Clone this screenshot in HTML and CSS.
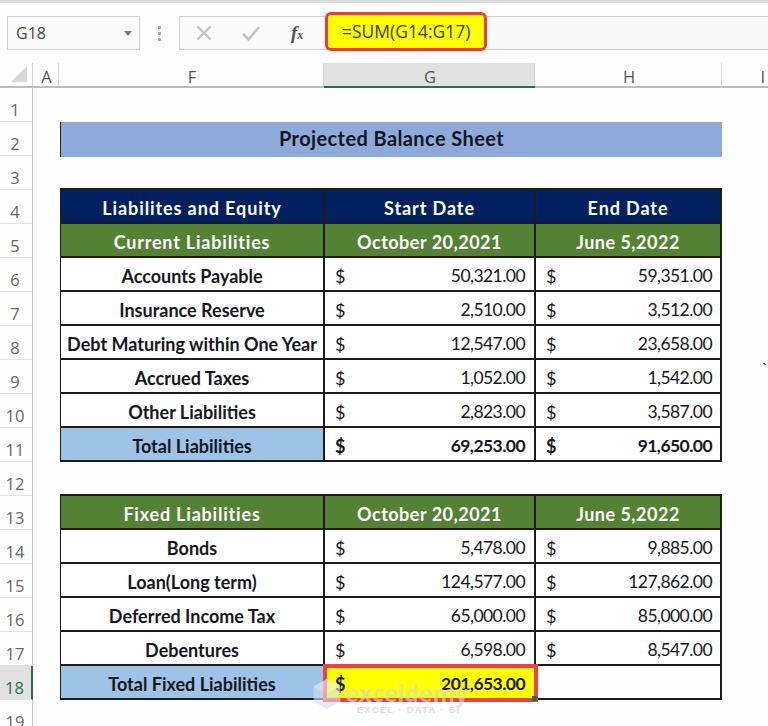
FILE: index.html
```html
<!DOCTYPE html>
<html lang="en">
<head>
<meta charset="utf-8">
<title>Projected Balance Sheet</title>
<link rel="stylesheet" href="styles.css">
</head>
<body>
<div class="top-strip"></div>
<div class="toolbar">
  <div class="namebox"><span>G18</span><i class="caret"></i></div>
  <div class="dots"><i></i><i></i><i></i></div>
  <div class="fxbox">
    <svg class="ico" width="18" height="18" viewBox="0 0 18 18"><path d="M2.500 2.500 L15.500 15.500 M15.500 2.500 L2.500 15.500" stroke="#c4c4c4" stroke-width="2.400" fill="none"/></svg>
    <svg class="ico" width="20" height="18" viewBox="0 0 20 18"><path d="M2 10 L7.500 15.500 L18 3" stroke="#c4c4c4" stroke-width="2.600" fill="none"/></svg>
    <span class="fx">f<span class="fx-x">x</span></span>
  </div>
  <div class="formula-track">
    <div class="formula">=SUM(G14:G17)</div>
  </div>
</div>
<div class="gap"></div>
<div class="colhead">
  <div class="corner"><i></i></div>
  <div class="ch ch-a">A</div>
  <div class="ch ch-f">F</div>
  <div class="ch ch-g">G</div>
  <div class="ch ch-h">H</div>
  <div class="ch ch-i">I</div>
</div>
<main class="sheet">
  <div class="row"><div class="rh">1</div></div>
  <div class="row"><div class="rh">2</div><div class="title">Projected Balance Sheet</div></div>
  <div class="row"><div class="rh">3</div><div class="rule"></div></div>

  <div class="row"><div class="rh">4</div><div class="c f navy">Liabilites and Equity</div><div class="c g navy">Start Date</div><div class="c h navy">End Date</div></div>
  <div class="row"><div class="rh">5</div><div class="c f green">Current Liabilities</div><div class="c g green date">October 20,2021</div><div class="c h green date">June 5,2022</div></div>
  <div class="row"><div class="rh">6</div><div class="c f lbl">Accounts Payable</div><div class="c g num"><span>$</span><span>50,321.00</span></div><div class="c h num"><span>$</span><span>59,351.00</span></div></div>
  <div class="row"><div class="rh">7</div><div class="c f lbl">Insurance Reserve</div><div class="c g num"><span>$</span><span>2,510.00</span></div><div class="c h num"><span>$</span><span>3,512.00</span></div></div>
  <div class="row"><div class="rh">8</div><div class="c f lbl">Debt Maturing within One Year</div><div class="c g num"><span>$</span><span>12,547.00</span></div><div class="c h num"><span>$</span><span>23,658.00</span></div></div>
  <div class="row"><div class="rh">9</div><div class="c f lbl">Accrued Taxes</div><div class="c g num"><span>$</span><span>1,052.00</span></div><div class="c h num"><span>$</span><span>1,542.00</span></div><div class="tick">`</div></div>
  <div class="row"><div class="rh">10</div><div class="c f lbl">Other Liabilities</div><div class="c g num"><span>$</span><span>2,823.00</span></div><div class="c h num"><span>$</span><span>3,587.00</span></div></div>
  <div class="row"><div class="rh">11</div><div class="c f lbl total">Total Liabilities</div><div class="c g num strong"><span>$</span><span>69,253.00</span></div><div class="c h num strong"><span>$</span><span>91,650.00</span></div></div>
  <div class="row"><div class="rh">12</div><div class="rule"></div></div>

  <div class="row"><div class="rh">13</div><div class="c f green">Fixed Liabilities</div><div class="c g green date">October 20,2021</div><div class="c h green date">June 5,2022</div></div>
  <div class="row"><div class="rh">14</div><div class="c f lbl">Bonds</div><div class="c g num"><span>$</span><span>5,478.00</span></div><div class="c h num"><span>$</span><span>9,885.00</span></div></div>
  <div class="row"><div class="rh">15</div><div class="c f lbl">Loan(Long term)</div><div class="c g num"><span>$</span><span>124,577.00</span></div><div class="c h num"><span>$</span><span>127,862.00</span></div></div>
  <div class="row"><div class="rh">16</div><div class="c f lbl">Deferred Income Tax</div><div class="c g num"><span>$</span><span>65,000.00</span></div><div class="c h num"><span>$</span><span>85,000.00</span></div></div>
  <div class="row"><div class="rh">17</div><div class="c f lbl">Debentures</div><div class="c g num"><span>$</span><span>6,598.00</span></div><div class="c h num"><span>$</span><span>8,547.00</span></div></div>
  <div class="row"><div class="rh rh-on">18</div><div class="c f lbl total">Total Fixed Liabilities</div><div class="c g num strong picked"><span>$</span><span>201,653.00</span></div><div class="c h"></div></div>
  <div class="row"><div class="rh">19</div></div>

  <div class="watermark">
    <svg width="30" height="32" viewBox="0 0 36 38"><path d="M18 1 L34 10 L34 28 L18 37 L2 28 L2 10 Z" fill="#d6e0ee"/><path d="M18 1 L34 10 L18 19 L2 10 Z" fill="#e9eef5"/></svg>
    <div class="wm-text">
      <div class="wm-name">exceldemy</div>
      <div class="wm-sub">EXCEL · DATA · BI</div>
    </div>
  </div>
</main>
</body>
</html>
```

FILE: styles.css
```css
* { box-sizing: border-box; }
html, body { margin: 0; padding: 0; }
body {
  width: 768px;
  height: 726px;
  overflow: hidden;
  background: #fefefe;
  font-family: Lato, "Open Sans", sans-serif;
  color: #16161e;
}
.top-strip { height: 3px; background: #dcdcdc; }
.toolbar {
  height: 47px;
  padding-top: 13px;
  display: flex;
  align-items: flex-start;
  background: #fefefe;
}
.namebox {
  margin-left: 7px;
  width: 133px;
  height: 34px;
  border: 1px solid #cfcfcf;
  background: #fafafa;
  display: flex;
  align-items: center;
  justify-content: space-between;
  padding: 0 7px 0 8px;
  font: 16px "Open Sans", sans-serif;
  color: #444;
}
.caret {
  width: 0; height: 0;
  border-left: 4.500px solid transparent;
  border-right: 4.500px solid transparent;
  border-top: 5px solid #777;
}
.dots {
  width: 39px;
  height: 34px;
  display: flex;
  flex-direction: column;
  align-items: center;
  justify-content: center;
  gap: 3px;
}
.dots i { width: 3px; height: 3px; background: #a9a9a9; }
.fxbox {
  width: 143px;
  height: 34px;
  border: 1px solid #cfcfcf;
  border-right: 0;
  background: #fafafa;
  display: flex;
  align-items: center;
  padding-left: 15px;
}
.fxbox .ico:nth-child(2) { margin-left: 28px; }
.fx {
  margin-left: 30px;
  font: italic bold 19px "Liberation Serif", serif;
  color: #555;
}
.fx-x { font-size: 12px; }
.formula-track {
  flex: 1;
  height: 34px;
  border-top: 1px solid #cfcfcf;
  border-bottom: 1px solid #cfcfcf;
  background: #f8f8f8;
  position: relative;
}
.formula {
  position: absolute;
  left: 3px;
  top: -5px;
  width: 162px;
  height: 39px;
  border: 3px solid #ee3b3b;
  border-radius: 6px;
  background: #ffff00;
  padding-left: 14px;
  font: 17.500px/33px "Open Sans", sans-serif;
  color: #3a3a10;
}
.gap { height: 13px; }
.colhead {
  height: 25px;
  display: flex;
  border-bottom: 2px solid #bdbdbd;
}
.corner { width: 33px; position: relative; border-right: 1px solid #d4d4d4; }
.corner i {
  position: absolute;
  right: 5px;
  bottom: 4px;
  width: 16px;
  height: 16px;
  background: #d8d8d8;
  clip-path: polygon(100% 0, 100% 100%, 0 100%);
}
.ch {
  display: flex;
  align-items: center;
  justify-content: center;
  padding: 3px 0 0 2px;
  font: 16.500px "Open Sans", sans-serif;
  color: #555;
  border-right: 1px solid #d4d4d4;
}
.ch-a { width: 26px; }
.ch-f { width: 265px; }
.ch-g { width: 211px; background: #e1e1e1; box-shadow: 0 2px 0 #217346; }
.ch-h { width: 187px; }
.ch-i { width: 46px; border-right: 0; justify-content: flex-end; padding-right: 3px; }
.sheet { position: relative; }
.row {
  height: 34px;
  display: grid;
  grid-template-columns: 33px 27px 265px 211px 186px 46px;
  grid-template-rows: 34px;
  position: relative;
}
.rh {
  grid-column: 1;
  font: 16.500px/20px "Open Sans", sans-serif;
  color: #666;
  text-align: center;
  padding: 12px 2px 0 0;
  border-right: 1px solid #c8c8c8;
  border-bottom: 1px solid #e2e2e2;
}
.rh-on {
  background: #e1e1e1;
  border-right: 2px solid #217346;
  color: #217346;
}
.title {
  grid-column: 3 / 6;
  height: 35px;
  background: #8eaadb;
  border-left: 1px solid #222;
  display: flex;
  align-items: center;
  justify-content: center;
  padding-bottom: 3px;
  font-weight: 700;
  font-size: 20px;
  letter-spacing: .4px;
  position: relative;
  z-index: 1;
}
.rule { grid-column: 3 / 6; border-bottom: 2px solid #1c1c1c; }
.c {
  display: flex;
  align-items: center;
  justify-content: center;
  padding-top: 3px;
  border-right: 2px solid #1c1c1c;
  border-bottom: 2px solid #1c1c1c;
  font-size: 18px;
}
.f { grid-column: 3; border-left: 1px solid #1c1c1c; }
.g { grid-column: 4; }
.h { grid-column: 5; }
.navy { background: #002060; color: #fff; font-weight: 700; letter-spacing: .9px; }
.green { background: #548235; color: #fff; font-weight: 700; letter-spacing: .8px; }
.green.date { letter-spacing: .5px; }
.lbl { font-weight: 700; background: #fff; }
.total { background: #9dc3e6; }
.num {
  justify-content: space-between;
  padding: 3px 9px 0 10px;
  background: #fff;
}
.h.num { padding-right: 8px; }
.num span:last-child { font-size: 17.500px; letter-spacing: -.55px; }
.strong { font-weight: 700; }
.picked {
  background: #ffff00;
  outline: 4px solid #ee4040;
  outline-offset: -2px;
  position: relative;
  z-index: 1;
}
.picked::after {
  content: "";
  position: absolute;
  right: -3px;
  bottom: -3px;
  width: 5px;
  height: 5px;
  background: #217346;
}
.tick { grid-column: 6; font-size: 14px; line-height: 16px; padding-left: 40px; }
.watermark {
  position: absolute;
  left: 312px;
  top: 590px;
  z-index: 2;
  display: flex;
  gap: 3px;
  opacity: .62;
  pointer-events: none;
}
.wm-name {
  font: 700 23px/24px "Open Sans", sans-serif;
  color: #d6d6d6;
  margin-top: 3px;
}
.wm-sub {
  font: 700 9px/10px "Liberation Sans", sans-serif;
  letter-spacing: 1.500px;
  color: #c8c8c8;
  padding-left: 12px;
}
```
